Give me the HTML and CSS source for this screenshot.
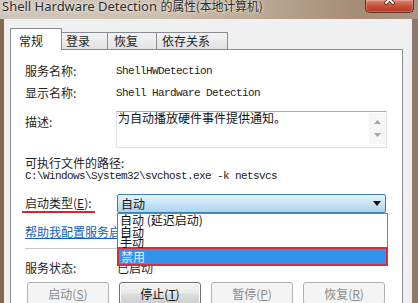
FILE: index.html
```html
<!DOCTYPE html>
<html lang="zh-CN">
<head>
<meta charset="utf-8">
<title>Shell Hardware Detection 的属性</title>
<link rel="stylesheet" href="styles.css">
</head>
<body>
<div class="titlebar">
  <span class="title">Shell Hardware Detection <span class="cjk">的属性(本地计算机)</span></span>
  <span class="close"><svg width="49" height="13" viewBox="0 0 49 13"><path d="M21 -4 L28 3 M28 -4 L21 3" stroke="#4a1a10" stroke-width="3.5" stroke-linecap="round"/><path d="M21 -4 L28 3 M28 -4 L21 3" stroke="#fff" stroke-width="2" stroke-linecap="round"/></svg></span>
</div>
<div class="client">
  <div class="tabs">
    <div class="tab active">常规</div>
    <div class="tab t2">登录</div>
    <div class="tab t3">恢复</div>
    <div class="tab t4">依存关系</div>
  </div>
  <div class="panel">
    <div class="row r1"><span class="label">服务名称:</span><span class="mono">ShellHWDetection</span></div>
    <div class="row r2"><span class="label">显示名称:</span><span class="mono">Shell Hardware Detection</span></div>
    <div class="row desc">
      <span class="label">描述:</span>
      <div class="textarea">
        <span class="tatext">为自动播放硬件事件提供通知。</span>
        <div class="scroll">
          <svg width="7" height="4" viewBox="0 0 7 4"><polygon points="0,4 7,4 3.5,0" fill="#a6a6a6"/></svg>
          <svg width="7" height="4" viewBox="0 0 7 4"><polygon points="0,0 7,0 3.5,4" fill="#a6a6a6"/></svg>
        </div>
      </div>
    </div>
    <div class="path">
      <div class="label">可执行文件的路径:</div>
      <div class="mono">C:\Windows\System32\svchost.exe -k netsvcs</div>
    </div>
    <div class="row startup">
      <span class="label marked">启动类型(<u>E</u>):</span>
      <div class="combo">
        <span class="combotext">自动</span>
        <svg class="arrow" width="8" height="5" viewBox="0 0 8 5"><polygon points="0,0 8,0 4,5" fill="#111"/></svg>
        <div class="list">
          <div class="item i1">自动 (延迟启动)</div>
          <div class="item i2">自动</div>
          <div class="item i3">手动</div>
          <div class="item i4">禁用</div>
        </div>
      </div>
    </div>
    <a class="link" href="#">帮助我配置服务启动选项。</a>
    <div class="sep"></div>
    <div class="row status"><span class="label">服务状态:</span><span class="statusval">已启动</span></div>
    <div class="buttons">
      <span class="btn disabled">启动(<u>S</u>)</span>
      <span class="btn">停止(<u>T</u>)</span>
      <span class="btn disabled">暂停(<u>P</u>)</span>
      <span class="btn disabled">恢复(<u>R</u>)</span>
    </div>
  </div>
</div>
</body>
</html>
```

FILE: styles.css
```css
* { box-sizing: border-box; }
html, body { margin: 0; padding: 0; }
body {
  width: 418px;
  height: 303px;
  overflow: hidden;
  background: linear-gradient(90deg, #86684f 0%, #937761 50%, #8d7a6e 100%);
  font-family: "Noto Sans CJK SC", "Noto Sans", sans-serif;
  font-size: 12px;
  color: #1e1e1e;
}
.titlebar {
  height: 19px;
  display: flex;
  align-items: flex-start;
  background: linear-gradient(90deg, #cfc6bb 0%, #cdc1b2 35%, #bca893 62%, #a58c76 85%, #a89483 100%);
}
.title {
  font-family: "Noto Sans", "Noto Sans CJK SC", sans-serif;
  font-size: 13px;
  line-height: 14px;
  margin: -1px 0 0 2px;
  color: #2a2a2a;
  white-space: nowrap;
  text-shadow: 0 0 5px #f4eee6, 0 0 2px #f4eee6;
}
.title .cjk {
  font-family: "Noto Sans CJK SC", sans-serif;
  font-size: 12px;
  letter-spacing: -0.2px;
}
.close {
  margin-left: auto;
  margin-right: 4px;
  width: 49px;
  height: 13px;
  border: 1px solid #5b3326;
  border-top: 0;
  border-radius: 0 0 5px 5px;
  background: linear-gradient(#d98a78 0%, #c9553f 45%, #b5331c 100%);
  box-shadow: inset 0 0 0 1px rgba(255, 200, 180, 0.35);
  overflow: hidden;
}
.close svg { display: block; margin: 0 0 0 -1px; }
.client {
  margin-left: 4px;
  width: 408px;
  height: 284px;
  background: #f0f0f0;
  padding: 9px 0 0 6px;
}
.tabs {
  display: flex;
  align-items: flex-end;
  height: 21px;
}
.tab {
  height: 17px;
  line-height: 14px;
  padding: 1px 0 0 6px;
  border: 1px solid #898c95;
  border-bottom: 0;
  border-left: 0;
  background: linear-gradient(#f3f3f3, #e2e2e2);
  color: #1e1e1e;
}
.tab.active {
  width: 52px;
  height: 22px;
  margin-bottom: -1px;
  padding: 5px 0 0 8px;
  border-left: 1px solid #898c95;
  background: #fff;
  position: relative;
  z-index: 1;
}
.tab.t2 { width: 46px; padding-left: 4px; }
.tab.t3 { width: 49px; padding-left: 6px; }
.tab.t4 { width: 71px; padding-left: 5px; }
.panel {
  width: 393px;
  height: 262px;
  border: 1px solid #898c95;
  background: #fff;
  padding: 14px 0 0 14px;
}
.row {
  display: grid;
  grid-template-columns: 91px 1fr;
  line-height: 14px;
}
.label { color: #1e1e1e; }
.mono {
  font-family: "Liberation Mono", "DejaVu Sans Mono", monospace;
  font-size: 11px;
  letter-spacing: -0.6px;
  color: #222;
}
.r2 { margin-top: 8px; }
.desc { margin-top: 11px; height: 37px; }
.desc .label { padding-top: 4px; }
.textarea {
  width: 271px;
  height: 37px;
  border: 1px solid #dbdfe6;
  border-top-color: #abadb3;
  border-left-color: #e2e3ea;
  display: flex;
}
.tatext {
  flex: 1;
  line-height: 12px;
  padding: 0 0 0 1px;
  color: #111;
}
.scroll {
  width: 17px;
  margin: 1px 0 3px;
  background: #f6f6f6;
  display: flex;
  flex-direction: column;
  align-items: center;
  gap: 9px;
  padding-top: 7px;
}
.scroll svg { display: block; }
.path { margin-top: 8px; }
.path .label { line-height: 14px; }
.path .mono { line-height: 13px; }
.startup { margin-top: 11px; height: 19px; }
.marked {
  justify-self: start;
  margin-left: -3px;
  padding: 2px 3px 1px;
  line-height: 14px;
  border-bottom: 2px solid #d8262a;
}
.combo {
  position: relative;
  margin-left: 1px;
  width: 269px;
  height: 19px;
  border: 1px solid #3c7fb1;
  border-radius: 2px;
  background: linear-gradient(#e4f2fb 0%, #cbe6f7 45%, #a9d4ef 100%);
  display: flex;
  align-items: center;
  padding-left: 3px;
}
.combotext { flex: 1; line-height: 14px; color: #111; }
.arrow { display: block; margin-right: 4px; }
.list {
  position: absolute;
  top: 18px;
  left: -1px;
  width: 271px;
  height: 53px;
  border: 1px solid #7f7f7f;
  border-bottom: 0;
  background: #fff;
  z-index: 2;
}
.item {
  padding-left: 2px;
  color: #111;
  white-space: nowrap;
}
.i1 { height: 12px; line-height: 12px; }
.i2 { height: 11px; line-height: 11px; }
.i3 { height: 10px; line-height: 10px; }
.i4 {
  height: 19px;
  line-height: 15px;
  margin: 0 -1px;
  border: 2px solid #d6313a;
  background: #3591ea;
  color: #e4f0ff;
}
.link {
  display: block;
  margin-top: 12px;
  line-height: 14px;
  color: #0b62bd;
  text-decoration: underline;
  white-space: nowrap;
}
.sep {
  margin-top: 9px;
  width: 362px;
  height: 1px;
  background: #c9c9c9;
}
.status { margin-top: 12px; }
.statusval { padding-left: 1px; }
.buttons {
  display: flex;
  gap: 10px;
  margin: 7px 0 0 2px;
}
.btn {
  width: 82px;
  height: 23px;
  display: flex;
  align-items: center;
  justify-content: center;
  border: 1px solid #707070;
  border-radius: 3px;
  background: linear-gradient(#f2f2f2 0%, #ebebeb 48%, #dddddd 52%, #cfcfcf 100%);
  box-shadow: inset 0 0 0 1px #fcfcfc;
  color: #111;
  line-height: 14px;
}
.btn.disabled {
  border-color: #adb2b5;
  background: #f4f4f4;
  box-shadow: none;
  color: #8a8a8a;
}
```
